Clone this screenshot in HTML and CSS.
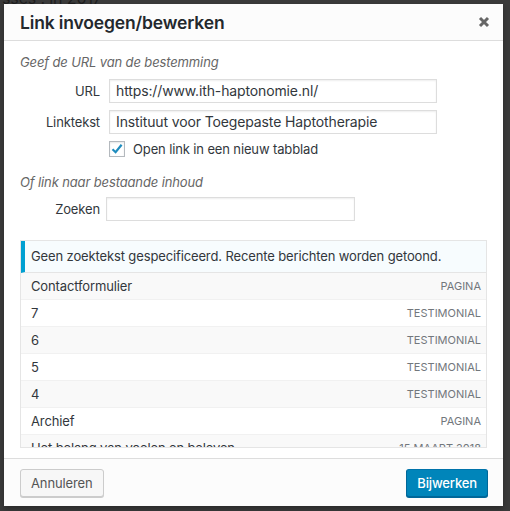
FILE: index.html
```html
<!DOCTYPE html>
<html lang="nl">
<head>
<meta charset="utf-8">
<title>Link invoegen/bewerken</title>
<link rel="stylesheet" href="styles.css">
</head>
<body>
<div class="backdrop-text">sses : in 2017</div>
<div class="modal">
  <div class="header">
    <h1 class="title">Link invoegen/bewerken</h1>
    <button class="close" aria-label="Sluiten">
      <svg width="12" height="12" viewBox="0 0 12 12"><path d="M2 2 L10 10 M10 2 L2 10" stroke="#666" stroke-width="3" stroke-linecap="butt"/></svg>
    </button>
  </div>
  <div class="content">
    <p class="howto">Geef de URL van de bestemming</p>
    <div class="field">
      <label class="label">URL</label>
      <div class="input wide">https://www.ith-haptonomie.nl/</div>
    </div>
    <div class="field">
      <label class="label">Linktekst</label>
      <div class="input wide">Instituut voor Toegepaste Haptotherapie</div>
    </div>
    <div class="check-row">
      <span class="checkbox">
        <svg width="14" height="14" viewBox="0 0 14 14"><path d="M2.5 7.2 L5.6 10.2 L11.6 2.8" fill="none" stroke="#1e8cbe" stroke-width="2.2"/></svg>
      </span>
      <span>Open link in een nieuw tabblad</span>
    </div>
    <p class="howto second">Of link naar bestaande inhoud</p>
    <div class="field search">
      <label class="label">Zoeken</label>
      <div class="input narrow"></div>
    </div>
    <div class="results">
      <div class="notice">Geen zoektekst gespecificeerd. Recente berichten worden getoond.</div>
      <ul class="list">
        <li class="alt"><span>Contactformulier</span><span class="type">Pagina</span></li>
        <li><span>7</span><span class="type">Testimonial</span></li>
        <li class="alt"><span>6</span><span class="type">Testimonial</span></li>
        <li><span>5</span><span class="type">Testimonial</span></li>
        <li class="alt"><span>4</span><span class="type">Testimonial</span></li>
        <li><span>Archief</span><span class="type">Pagina</span></li>
        <li class="alt"><span>Het belang van voelen en beleven</span><span class="type">15 maart 2018</span></li>
      </ul>
    </div>
  </div>
  <div class="footer">
    <button class="btn">Annuleren</button>
    <button class="btn primary">Bijwerken</button>
  </div>
</div>
</body>
</html>
```

FILE: styles.css
```css
html, body {
  margin: 0;
  padding: 0;
}
body {
  background: #3b3b3b;
  width: 510px;
  height: 511px;
  overflow: hidden;
  font-family: Inter, "Noto Sans", sans-serif;
  color: #32373c;
  position: relative;
  letter-spacing: -0.13px;
}
.backdrop-text {
  position: absolute;
  top: -12px;
  left: 2px;
  font-size: 16px;
  color: #1f1f1f;
}
.modal {
  position: absolute;
  top: 4px;
  left: 4px;
  width: 499px;
  height: 502px;
  background: #fff;
  display: flex;
  flex-direction: column;
  box-shadow: 0 3px 6px rgba(0,0,0,0.3);
}
.header {
  height: 36px;
  flex: none;
  background: #fcfcfc;
  border-bottom: 1px solid #dddddd;
  display: flex;
  align-items: center;
  justify-content: space-between;
  padding: 0 12px 0 16px;
}
.title {
  margin: 0;
  font-size: 17.5px;
  font-weight: 600;
  color: #23282d;
  letter-spacing: -0.15px;
}
.close {
  border: 0;
  background: none;
  padding: 0;
  width: 14px;
  height: 14px;
  display: flex;
  align-items: center;
  justify-content: center;
}
.content {
  flex: 1;
  padding: 0 16px;
  font-size: 13px;
}
.howto {
  margin: 12px 0 8px;
  font-style: italic;
  color: #666;
  font-size: 13px;
  line-height: 18px;
}
.howto.second {
  margin: 16px 0 6px;
}
.field {
  display: flex;
  align-items: center;
  margin-bottom: 7px;
}
.label {
  width: 80px;
  text-align: right;
  margin-right: 9px;
  font-size: 13px;
  color: #32373c;
}
.search .label {
  margin-right: 6px;
}
.search {
  margin-top: 1px;
}
.input {
  height: 22px;
  border: 1px solid #dddddd;
  box-shadow: inset 0 1px 2px rgba(0,0,0,0.07);
  box-sizing: content-box;
  padding: 0 6px;
  font-size: 14px;
  line-height: 22px;
  color: #32373c;
  background: #fff;
  white-space: nowrap;
  overflow: hidden;
}
.wide {
  width: 314px;
}
.narrow {
  width: 235px;
}
.check-row {
  display: flex;
  align-items: center;
  margin-left: 89px;
  font-size: 13px;
  height: 16px;
}
.checkbox {
  width: 14px;
  height: 14px;
  border: 1px solid #b4b9be;
  box-shadow: inset 0 1px 2px rgba(0,0,0,0.1);
  display: flex;
  align-items: center;
  justify-content: center;
  margin-right: 8px;
  background: #fff;
}
.results {
  margin-top: 19px;
  border: 1px solid #e5e5e5;
  height: 206px;
  overflow: hidden;
}
.notice {
  background: #f7fcfe;
  border-left: 4px solid #00a0d2;
  border-bottom: 1px solid #e5e5e5;
  padding: 0 6px;
  height: 31px;
  line-height: 31px;
  font-size: 13px;
}
.list {
  list-style: none;
  margin: 0;
  padding: 0;
}
.list li {
  display: flex;
  justify-content: space-between;
  align-items: center;
  height: 26px;
  border-bottom: 1px solid #f1f1f1;
  padding: 0 5px 0 10px;
  font-size: 13px;
  background: #fff;
}
.list li.alt {
  background: #f9f9f9;
}
.type {
  text-transform: uppercase;
  font-size: 11px;
  color: #72777c;
  letter-spacing: 0;
}
.footer {
  flex: none;
  height: 48px;
  box-sizing: border-box;
  border-top: 1px solid #dddddd;
  background: #fcfcfc;
  display: flex;
  align-items: center;
  justify-content: space-between;
  padding: 0 15px 0 16px;
}
.btn {
  height: 28px;
  padding: 0 10px;
  font-family: inherit;
  font-size: 13px;
  letter-spacing: -0.13px;
  color: #555;
  background: #f7f7f7;
  border: 1px solid #cccccc;
  border-radius: 3px;
  box-shadow: 0 1px 0 #cccccc;
}
.btn.primary {
  background: #0085ba;
  border-color: #0073aa #006799 #006799;
  box-shadow: 0 1px 0 #006799;
  color: #fff;
  font-weight: 500;
}
```
